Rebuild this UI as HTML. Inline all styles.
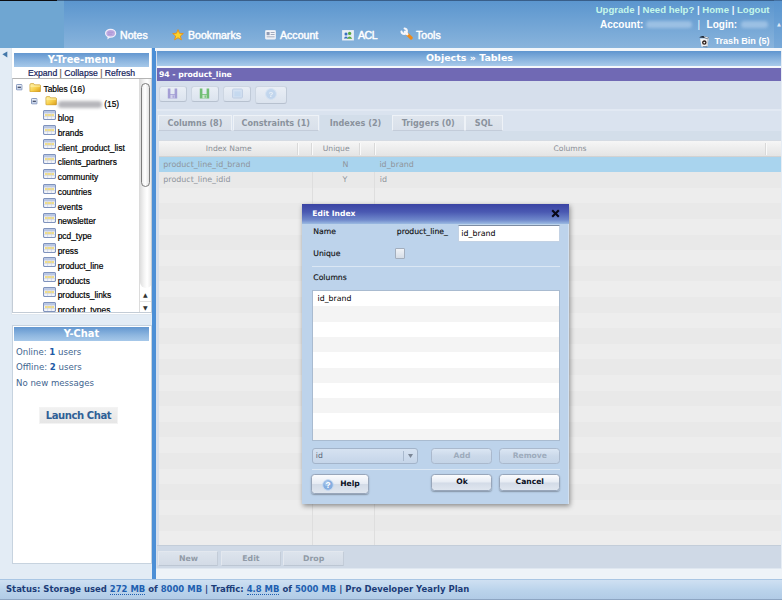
<!DOCTYPE html>
<html>
<head>
<meta charset="utf-8">
<title>Objects - Tables</title>
<style>
html,body{margin:0;padding:0;}
body{width:782px;height:600px;overflow:hidden;position:relative;background:#e3ecf5;font-family:"DejaVu Sans","Liberation Sans",sans-serif;font-size:9px;color:#000;}
.abs{position:absolute;}
#hdr{left:0;top:0;width:782px;height:48px;background:linear-gradient(#5a95ce,#89b4dc);}
#hdrL{left:0;top:0;width:64px;height:48px;background:#6fa6d2;}
#blk{left:0;top:0;width:57px;height:1.2px;background:#0c0c10;}
#topln{left:57px;top:0;width:725px;height:1px;background:rgba(30,50,80,.55);}
.nav{top:28px;height:14px;line-height:14px;font-size:10.6px;font-family:"Liberation Sans",sans-serif;color:#fff;white-space:nowrap;-webkit-text-stroke:0.3px #fff;text-shadow:0 0 1px rgba(255,255,255,.5);}
.tl{color:#c4f7ea;font-weight:bold;font-size:9.6px;font-family:"Liberation Sans",sans-serif;white-space:nowrap;text-align:right;right:12.5px;}
.tl span.s{color:#eef6ff;}
.blur{display:inline-block;height:7px;border-radius:4px;background:rgba(190,215,240,.55);filter:blur(1.5px);vertical-align:middle;}
#rstrip{left:774px;top:0;width:8px;height:48px;background:rgba(90,150,210,.35);}
/* left */
#lgut{left:0;top:48px;width:12px;height:531px;background:#e3ecf5;}
.ptitle{background:linear-gradient(#6397d0,#8fb7e0 60%,#a6c8e9);color:#fff;font-weight:bold;text-align:center;font-size:10px;line-height:13px;height:13px;}
#tree{left:12px;top:78.4px;width:140px;height:234.6px;background:#fff;border:1px solid #c3ccd6;border-top:1.2px solid #b4b4b4;box-sizing:border-box;overflow:hidden;}
.ti{position:absolute;left:45.8px;margin-top:1.6px;font-size:8.4px;font-family:"Liberation Sans",sans-serif;line-height:11px;white-space:nowrap;color:#000;-webkit-text-stroke:0.2px #000;}
.tic{position:absolute;left:31px;margin-top:-1.1px}
.fold{position:absolute;width:11px;height:8px;background:linear-gradient(#fbe38a,#e3a92b);border:1px solid #b98a1e;border-radius:1px;box-sizing:border-box;}
.fold:before{content:"";position:absolute;left:-1px;top:-3px;width:5px;height:2px;background:#eec04c;border:1px solid #b98a1e;border-bottom:none;border-radius:1px 1px 0 0;}
.pm{position:absolute;width:6px;height:6px;border:1px solid #6d7f9c;background:#fff;border-radius:1px;}
.pm:before{content:"";position:absolute;left:1px;top:2.5px;width:4px;height:1px;background:#223;}
#chat{left:12px;top:325px;width:140px;height:238.5px;background:#fff;border:1px solid #c7d3df;box-sizing:border-box;}
.cl{position:absolute;left:4px;font-size:8.6px;color:#3f6690;white-space:nowrap;}
.cl b{color:#1e5aa6;}
#vbar{left:152.4px;top:48px;width:3.7px;height:530.6px;background:#4c8fd6;}
/* main */
#main{left:156.3px;top:51px;width:625.7px;height:518px;background:#d6dfec;}
#mtitle{left:157px;top:51px;width:625px;height:15.4px;background:linear-gradient(#5f95cf,#8db6df 60%,#a9cbea);color:#fff;font-weight:bold;font-size:9.5px;line-height:14.6px;}
#ptitle2{left:157px;top:68px;width:625px;height:13.2px;background:#7069b4;color:#fff;font-weight:bold;font-size:7.7px;line-height:13px;}
.tbtn{position:absolute;top:85.5px;height:16px;width:28px;border:1px solid #cdd6e2;border-bottom-color:#b7c1cf;border-right-color:#c0cad8;border-radius:3px;background:linear-gradient(#e9eef5,#dbe3ee);box-sizing:border-box;}
.tab{position:absolute;top:115.3px;height:15.5px;border:1px solid #eef2f7;border-bottom:1px solid #c3ccd9;background:linear-gradient(#e0e6ee,#d9e0ea);box-sizing:border-box;font-size:8.1px;font-weight:bold;color:#8a929d;text-align:center;line-height:14px;}
#grid{left:159px;top:141.4px;width:621.6px;height:403.4px;background:repeating-linear-gradient(#e9e9e9 0,#e9e9e9 15.6px,#ededed 15.6px,#ededed 31.2px);}
#ghead{left:159px;top:140.2px;width:621.6px;height:16.4px;background:linear-gradient(#f6f6f6,#e4e4e4);border-bottom:1px solid #d2d2d2;border-top:1px solid #d5dbe3;box-sizing:border-box;}
.gh{position:absolute;top:141px;height:15.6px;line-height:15.8px;font-size:7.64px;color:#8a8f96;text-align:center;}
.gc{position:absolute;font-size:7.95px;color:#8f949c;line-height:15.8px;height:15.6px;white-space:nowrap;}
.vl{position:absolute;top:157px;width:1px;height:388px;background:#dedede;}
.hs{position:absolute;top:142.5px;width:1px;height:12.5px;background:#d9d9d9;box-shadow:1px 0 0 #fafafa;}
.bbtn{position:absolute;top:551px;height:15.4px;width:60px;border:1px solid #e3e8ef;border-bottom-color:#bcc6d3;border-right-color:#c3ccd8;border-radius:1px;background:linear-gradient(#dde4ed,#d3dbe6);box-sizing:border-box;font-size:7.8px;font-weight:bold;color:#909aa6;text-align:center;line-height:13.5px;}
#status{left:0;top:578.6px;width:782px;height:21.4px;background:linear-gradient(#cfe0f2,#bad3eb 55%,#b1cbe6);border-top:1px solid #a9c6e4;border-bottom:1.5px solid #8da5c2;box-sizing:border-box;font-size:8.48px;font-weight:bold;color:#1c3c78;line-height:19.6px;white-space:nowrap;}
#status u{color:#1f5fb0;text-decoration:none;border-bottom:1px dotted #1f5fb0;}
#status i{color:#1f5fb0;font-style:normal;}
/* dialog */
#dlg{left:302.3px;top:203.6px;width:266.5px;height:300.2px;background:#bdd3eb;box-shadow:1px 2px 5px rgba(0,0,0,.42), inset -1px 0 0 rgba(255,255,255,.3);}
#dtitle{left:0;top:0;width:266.8px;height:20px;background:linear-gradient(#3a43a3,#4a59b2 40%,#6f88cb 80%,#9cbbe2);color:#fff;font-weight:bold;font-size:7.6px;line-height:18px;}
.dl{position:absolute;-webkit-text-stroke:0.15px #111;font-size:7.7px;color:#111;white-space:nowrap;}
.dbtn{position:absolute;height:16px;border:1px solid #98a6ba;border-radius:3.5px;background:linear-gradient(#fbfcfe,#e6ebf3 48%,#d3dbe7 52%,#dfe6ef);box-sizing:border-box;font-size:7.6px;font-weight:bold;color:#0a0f1e;text-align:center;line-height:14.6px;box-shadow:0 1px 1.5px rgba(0,0,0,.3);}
.dbtn.dis{color:#9dabbc;border-color:#aab9cd;background:linear-gradient(#dbe6f3,#cbd9ea 50%,#c4d4e7);box-shadow:none;}
</style>
</head>
<body>
<!-- header -->
<div class="abs" id="hdr"></div>
<div class="abs" id="hdrL"></div>
<div class="abs" id="blk"></div><div class="abs" id="topln"></div>
<div class="abs" id="rstrip"></div>
<div class="abs" style="left:777px;top:21px;font-size:5px;color:#dfeaf6;">▲</div>

<svg class="abs" style="left:104px;top:28px" width="13" height="13" viewBox="0 0 13 13"><path d="M3.6 8.4 L3.4 11.4 L6.6 9Z" fill="#f2eefa"/><ellipse cx="6.6" cy="5.3" rx="5" ry="3.9" fill="#bda9e0" stroke="#f2eefa" stroke-width="1.3"/><path d="M4 4.3 H9.2 M4 6.2 H8" stroke="#a893d2" stroke-width=".8"/></svg>
<div class="abs nav" style="left:120px">Notes</div>
<svg class="abs" style="left:172px;top:28.5px" width="12" height="12" viewBox="0 0 14 14"><path d="M7 0.8 L8.8 5 L13.2 5.3 L9.8 8.2 L10.9 12.6 L7 10.2 L3.1 12.6 L4.2 8.2 L0.8 5.3 L5.2 5Z" fill="#fbd42a" stroke="#e8921a" stroke-width="1.1" stroke-linejoin="round"/></svg>
<div class="abs nav" style="left:188px">Bookmarks</div>
<svg class="abs" style="left:264.5px;top:30px" width="11" height="10" viewBox="0 0 11 10"><rect x=".5" y=".5" width="10" height="8.6" rx=".6" fill="#f3f5f9" stroke="#e3e9f2"/><rect x="1.6" y="2" width="3" height="3.2" fill="#8f9ab3"/><rect x="5.6" y="2" width="4" height=".9" fill="#98a2b6"/><rect x="5.6" y="4" width="4" height=".9" fill="#98a2b6"/><rect x="1.6" y="6.4" width="8" height=".9" fill="#98a2b6"/></svg>
<div class="abs nav" style="left:280px">Account</div>
<svg class="abs" style="left:342px;top:29.5px" width="12" height="11" viewBox="0 0 12 11"><rect x=".6" y=".6" width="10.8" height="9.4" fill="#f0f4f8" stroke="#e6ecf3" stroke-width="1"/><rect x="1.6" y="1.6" width="8.8" height="7.4" fill="#dfe8f0"/><circle cx="4" cy="4" r="1.5" fill="#3a6fc2"/><path d="M1.8 8.6 Q4 4.6 6.2 8.6Z" fill="#3a6fc2"/><circle cx="7.6" cy="3.4" r="1.6" fill="#57a840"/><path d="M5 8.8 Q7.6 4.2 10.2 8.8Z" fill="#57a840"/></svg>
<div class="abs nav" style="left:358px;letter-spacing:-0.5px">ACL</div>
<svg class="abs" style="left:400px;top:27px" width="14" height="14" viewBox="0 0 14 14"><path d="M7.2 7.2 L11.2 11" stroke="#ee8a18" stroke-width="3.2" stroke-linecap="round"/><path d="M5 5 L7.2 7.2" stroke="#f3f3f7" stroke-width="2.6" stroke-linecap="round"/><path d="M1.5 4.6 A2.7 2.7 0 1 0 4.6 1.5" stroke="#f6f6fa" stroke-width="2.1" fill="none" stroke-linecap="round"/></svg>
<div class="abs nav" style="left:416px">Tools</div>

<div class="abs tl" style="top:4px">Upgrade <span class="s">|</span> Need help? <span class="s">|</span> Home <span class="s">|</span> Logout</div>
<div class="abs tl" style="top:19px;color:#fff;font-size:10px;left:600px;right:auto">Account:</div>
<div class="abs blur" style="left:646px;top:21px;width:46px"></div>
<div class="abs tl" style="top:19px;color:#eef6ff;font-size:10px;left:697.5px;right:auto;font-weight:normal">|</div>
<div class="abs tl" style="top:19px;color:#fff;font-size:10px;left:706.6px;right:auto">Login:</div>
<div class="abs blur" style="left:741px;top:21px;width:27px"></div>
<div class="abs tl" style="top:35.7px;color:#fff;font-size:9.1px">Trash Bin (5)</div>
<svg class="abs" style="left:698px;top:35px" width="12" height="13" viewBox="0 0 12 13"><path d="M2 3.5 L10.6 3.2 L9.6 11.6 L3.6 11.8Z" fill="#f4f4f4"/><path d="M9 4 L10.6 3.2 L9.6 11.6 L8.3 11.7Z" fill="#c9ced6"/><path d="M1.2 2.6 Q3 0.6 6 1.2 L10.8 2.6 Q10.5 4 8.6 3.6 Q5 2.6 1.2 2.6Z" fill="#1d2430"/><path d="M6 1.3 L10.6 2.6 L9.8 3.6 L6.4 2.6Z" fill="#e8eaee"/><circle cx="6.3" cy="7.6" r="1.6" fill="#f2f2f2" stroke="#2a1a14" stroke-width="1.3"/><path d="M4.5 11.6 L9.5 11.5 L9.4 12.2 L5 12.1Z" fill="#39536e"/></svg>

<!-- left column -->
<div class="abs" id="lgut"></div>
<svg class="abs" style="left:2px;top:51px" width="6" height="7" viewBox="0 0 6 7"><path d="M5.3 0.4 L5.3 6.4 L0.4 3.2Z" fill="#4578a9"/></svg>
<div class="abs" style="left:11.2px;top:48.4px;width:140.8px;height:267px;background:#fff;border:1px solid #dfe7ef;border-top:none;box-sizing:border-box;"></div>
<div class="abs ptitle" style="left:14px;top:53.3px;width:135px;height:13.5px;font-size:9.9px">Y-Tree-menu</div>
<div class="abs" style="left:14px;top:67px;width:135px;height:13px;text-align:center;font-size:8.65px;font-family:'Liberation Sans',sans-serif;line-height:13px;color:#141c5a;white-space:nowrap;-webkit-text-stroke:0.2px #141c5a">Expand <span style="color:#b08a3a">|</span> Collapse <span style="color:#b08a3a">|</span> Refresh</div>
<svg width="0" height="0" style="position:absolute"><defs>
<linearGradient id="fg" x1="0" y1="0" x2="1" y2="1"><stop offset="0" stop-color="#fff3a6"/><stop offset=".55" stop-color="#f7cf4a"/><stop offset="1" stop-color="#d99a1c"/></linearGradient>
<linearGradient id="pg" x1="0" y1="0" x2="0" y2="1"><stop offset="0" stop-color="#f4f7fc"/><stop offset="1" stop-color="#b9c8e2"/></linearGradient>
<symbol id="tbl" viewBox="0 0 13 10"><rect x=".5" y=".5" width="12" height="9" rx="1.3" fill="#f3f5fa" stroke="#7f93bd" stroke-width="1.1"/><rect x="1" y="1" width="11" height="2" fill="#b9c7e3"/><rect x="2" y="4" width="9" height="2.2" fill="#f2de86"/><path d="M1 3.6 H12 M1 6.6 H12 M4.6 3.6 V9 M8.4 3.6 V9" stroke="#c9cfdf" stroke-width=".6" fill="none"/></symbol>
<symbol id="fld" viewBox="0 0 12 10"><path d="M.5 2 Q.5 .6 1.6 .6 H4.4 L5.4 1.9 H10.6 Q11.5 1.9 11.5 2.8 V8.6 Q11.5 9.4 10.6 9.4 H1.4 Q.5 9.4 .5 8.6Z" fill="url(#fg)" stroke="#c79a2e" stroke-width=".7"/><path d="M1 3.2 H11" stroke="#fff7c4" stroke-width=".8"/></symbol>
<symbol id="pm" viewBox="0 0 7 7"><rect x=".5" y=".5" width="6" height="6" rx=".8" fill="url(#pg)" stroke="#7f93ba"/><path d="M1.8 3.5 H5.2" stroke="#1b2340" stroke-width="1.2"/></symbol>
</defs></svg>
<div class="abs" id="tree"><div style="position:absolute;left:-1.1px;top:0.4px">
  <svg class="abs" style="left:4px;top:4.3px" width="6.6" height="6.6"><use href="#pm"/></svg>
  <svg class="abs" style="left:17.1px;top:2.9px" width="12.4" height="9.6"><use href="#fld"/></svg>
  <div class="ti" style="left:31.6px;top:2.8px">Tables (16)</div>
  <svg class="abs" style="left:19.4px;top:18.4px" width="6.6" height="6.6"><use href="#pm"/></svg>
  <svg class="abs" style="left:32.6px;top:16.3px" width="12.4" height="9.6"><use href="#fld"/></svg>
  <div class="ti" style="left:46px;top:17.2px"><span class="blur" style="width:44px;background:rgba(110,110,120,.5)"></span> (15)</div>
  <svg class="tic" style="top:31.20px" width="13" height="10"><use href="#tbl"/></svg><div class="ti" style="top:31.80px">blog</div>
  <svg class="tic" style="top:45.96px" width="13" height="10"><use href="#tbl"/></svg><div class="ti" style="top:46.56px">brands</div>
  <svg class="tic" style="top:60.72px" width="13" height="10"><use href="#tbl"/></svg><div class="ti" style="top:61.32px">client_product_list</div>
  <svg class="tic" style="top:75.48px" width="13" height="10"><use href="#tbl"/></svg><div class="ti" style="top:76.08px">clients_partners</div>
  <svg class="tic" style="top:90.24px" width="13" height="10"><use href="#tbl"/></svg><div class="ti" style="top:90.84px">community</div>
  <svg class="tic" style="top:105.00px" width="13" height="10"><use href="#tbl"/></svg><div class="ti" style="top:105.60px">countries</div>
  <svg class="tic" style="top:119.76px" width="13" height="10"><use href="#tbl"/></svg><div class="ti" style="top:120.36px">events</div>
  <svg class="tic" style="top:134.52px" width="13" height="10"><use href="#tbl"/></svg><div class="ti" style="top:135.12px">newsletter</div>
  <svg class="tic" style="top:149.28px" width="13" height="10"><use href="#tbl"/></svg><div class="ti" style="top:149.88px">pcd_type</div>
  <svg class="tic" style="top:164.04px" width="13" height="10"><use href="#tbl"/></svg><div class="ti" style="top:164.64px">press</div>
  <svg class="tic" style="top:178.80px" width="13" height="10"><use href="#tbl"/></svg><div class="ti" style="top:179.40px">product_line</div>
  <svg class="tic" style="top:193.56px" width="13" height="10"><use href="#tbl"/></svg><div class="ti" style="top:194.16px">products</div>
  <svg class="tic" style="top:208.32px" width="13" height="10"><use href="#tbl"/></svg><div class="ti" style="top:208.92px">products_links</div>
  <svg class="tic" style="top:223.08px" width="13" height="10"><use href="#tbl"/></svg><div class="ti" style="top:223.68px">product_types</div>
  </div><!-- scrollbar -->
  <div style="position:absolute;left:126px;top:0;width:13px;height:236px;background:#fff;border-left:1px solid #dcdcdc;"></div>
  <div style="position:absolute;left:127.4px;top:-6px;width:11.2px;height:215px;border-radius:6px;background:linear-gradient(90deg,#dedede,#f4f4f4 35%,#fff 60%,#e6e6e6);"></div>
  <div style="position:absolute;left:127px;top:222px;width:12px;height:1px;background:#e2e2e2"></div>
  <div style="position:absolute;left:127.7px;top:3.6px;width:7.2px;height:102.2px;border:1.7px solid #7c7c7c;border-radius:5.5px;background:linear-gradient(90deg,#ececec,#fff 45%,#e2e2e2);"></div>
  <div style="position:absolute;left:130px;top:212px;font-size:6px;line-height:7px;color:#333">▲</div>
  <div style="position:absolute;left:130px;top:224.5px;font-size:6px;line-height:7px;color:#333">▼</div>
</div>

<div class="abs" id="chat"></div>
<div class="abs ptitle" style="left:14px;top:327.4px;width:135px;height:13.4px;font-size:9.9px">Y-Chat</div>
<div class="abs cl" style="left:16px;top:346.6px">Online: <b>1</b> users</div>
<div class="abs cl" style="left:16px;top:362px">Offline: <b>2</b> users</div>
<div class="abs cl" style="left:16px;top:377.5px">No new messages</div>
<div class="abs" style="left:39px;top:407.4px;width:79px;height:16.6px;background:linear-gradient(#f1f1f1,#e6e6e6);border:1px solid #f3f3f3;box-sizing:border-box;text-align:center;font-family:'DejaVu Sans Condensed','DejaVu Sans',sans-serif;font-size:11.2px;letter-spacing:-0.45px;font-weight:bold;color:#2f6096;line-height:16.6px;">Launch Chat</div>

<div class="abs" id="vbar"></div>

<!-- main -->
<div class="abs" id="main"></div>
<div class="abs" style="left:155px;top:48px;width:627px;height:3px;background:#f2f6fa"></div>
<div class="abs" id="mtitle"><span style="position:absolute;left:269px;white-space:nowrap">Objects » Tables</span></div>
<div class="abs" style="left:157px;top:66.4px;width:625px;height:1.6px;background:#f5f8fb"></div>
<div class="abs" id="ptitle2"><span style="position:absolute;left:2px;white-space:nowrap">94 - product_line</span></div>
<div class="tbtn" style="left:158.5px"></div>
<div class="tbtn" style="left:190.5px"></div>
<div class="tbtn" style="left:223px"></div>
<div class="tbtn" style="left:254.7px;width:32.7px;height:18px"></div>
<svg class="abs" style="left:167px;top:88px;opacity:.75" width="11" height="11" viewBox="0 0 11 11"><path d="M.8 .6 H3.4 V6 H7.6 V.6 H10.2 V10.4 H.8Z" fill="#8f86cc"/><rect x="3.4" y="6.8" width="4.2" height="3.6" fill="#cfcdea"/><rect x="5.6" y="7.4" width="1.2" height="2.4" fill="#8f86cc"/></svg>
<svg class="abs" style="left:199px;top:88px;opacity:.8" width="11" height="11" viewBox="0 0 11 11"><path d="M.8 .6 H3.4 V6 H7.6 V.6 H10.2 V10.4 H.8Z" fill="#55b455"/><rect x="3.4" y="6.8" width="4.2" height="3.6" fill="#c9e8c9"/><rect x="5.6" y="7.4" width="1.2" height="2.4" fill="#55b455"/></svg>
<svg class="abs" style="left:231.5px;top:88px;opacity:.6" width="11" height="11" viewBox="0 0 11 11"><rect x=".6" y="1" width="9.8" height="9" rx="1" fill="#c9dcf2" stroke="#a9bddb"/><rect x="2.4" y="3.4" width="6.2" height="5" fill="#b3d0ee"/></svg>
<svg class="abs" style="left:264.5px;top:88px;opacity:.55" width="12" height="12" viewBox="0 0 12 12"><circle cx="6" cy="6" r="5.4" fill="#a7c7ea" stroke="#c9dcf2"/><text x="6" y="9" font-size="8" font-weight="bold" text-anchor="middle" fill="#eef5fc" font-family="Liberation Sans,sans-serif">?</text></svg>

<div class="abs" style="left:157px;top:109px;width:625px;height:1.5px;background:#e2e9f3"></div>
<div class="abs" style="left:157px;top:110.5px;width:625px;height:20px;background:#dae3ef"></div>
<div class="abs" style="left:157px;top:130.5px;width:625px;height:10.5px;background:#d3deea;"></div>
<div class="tab" style="left:158px;width:74px">Columns (8)</div>
<div class="tab" style="left:232.5px;width:86.5px">Constraints (1)</div>
<div class="tab" style="left:319.5px;width:72px;background:#d3deea;height:16.5px;border:none;line-height:16px">Indexes (2)</div>
<div class="tab" style="left:392px;width:72.5px">Triggers (0)</div>
<div class="tab" style="left:465px;width:37.5px">SQL</div>

<div class="abs" id="grid"></div>
<div class="abs" id="ghead"></div>
<div class="vl" style="left:311.6px"></div>
<div class="vl" style="left:373.6px"></div>
<div class="abs" style="left:159px;top:156.6px;width:621.6px;height:15.6px;background:#a9d4ee"></div>
<div class="hs" style="left:297px"></div><div class="hs" style="left:311.2px"></div><div class="hs" style="left:358.6px"></div><div class="hs" style="left:373.6px"></div><div class="hs" style="left:764.6px"></div>
<div class="gh" style="left:157px;width:143.6px">Index Name</div>
<div class="gh" style="left:312px;width:48.4px">Unique</div>
<div class="gh" style="left:374px;width:392px">Columns</div>
<div class="gc" style="left:163.3px;top:156.6px">product_line_id_brand</div>
<div class="gc" style="left:342.6px;top:156.6px">N</div>
<div class="gc" style="left:379.4px;top:156.6px">id_brand</div>
<div class="gc" style="left:163.3px;top:172.2px">product_line_idid</div>
<div class="gc" style="left:342.6px;top:172.2px">Y</div>
<div class="gc" style="left:379.8px;top:172.2px">id</div>

<div class="abs" style="left:157px;top:544.8px;width:625px;height:23.6px;background:#cfd9e6;border-top:1px solid #c3cdd9;box-sizing:border-box"></div>
<div class="bbtn" style="left:158.4px">New</div>
<div class="bbtn" style="left:220.9px">Edit</div>
<div class="bbtn" style="left:283.3px;width:60.7px">Drop</div>
<div class="abs" style="left:156px;top:568.4px;width:626px;height:10.2px;background:#eef3f8;border-top:1px solid #dfe7f0;box-sizing:border-box"></div>

<div class="abs" style="left:780.6px;top:51px;width:1.4px;height:518px;background:#e6edf5"></div>
<!-- status -->
<div class="abs" id="status"><span style="position:absolute;left:6px">Status: Storage used <u>272 MB</u> of <i>8000 MB</i> | Traffic: <u>4.8 MB</u> of <i>5000 MB</i> | Pro Developer Yearly Plan</span></div>

<!-- dialog -->
<div class="abs" id="dlg">
  <div class="abs" id="dtitle"><span style="position:absolute;left:10px;top:1px">Edit Index</span>
    <svg style="position:absolute;left:248.6px;top:5.5px" width="9" height="9" viewBox="0 0 9 9"><path d="M1.2 1.2 L7.8 7.8 M7.8 1.2 L1.2 7.8" stroke="#080818" stroke-width="2.1"/></svg>
  </div>
  <div class="dl" style="left:11px;top:23px">Name</div>
  <div class="dl" style="left:94.5px;top:23px">product_line_</div>
  <div class="abs" style="left:155.5px;top:21.5px;width:102.5px;height:16.5px;background:#fff;border:1px solid #c3d2e4;border-top-color:#7c8ca3;box-sizing:border-box;font-size:7.9px;line-height:15.5px;padding-left:2.5px;">id_brand</div>
  <div class="dl" style="left:11px;top:45px">Unique</div>
  <div class="abs" style="left:92.3px;top:44.6px;width:10.4px;height:10.6px;border:1px solid #a3aebd;background:linear-gradient(#f0f3f7,#d6dde7);box-sizing:border-box;border-radius:1px"></div>
  <div class="abs" style="left:10px;top:62px;width:248px;height:1px;background:#dbe7f4"></div>
  <div class="dl" style="left:11px;top:69.4px">Columns</div>
  <div class="abs" style="left:9.9px;top:86.1px;width:247.8px;height:151.3px;background:repeating-linear-gradient(#fff 0,#fff 15.3px,#f4f4f4 15.3px,#f4f4f4 30.6px);border:1px solid #a9bbd0;box-sizing:border-box;"><span style="position:absolute;left:4.4px;top:3.6px;font-size:7.8px">id_brand</span></div>
  <div class="abs" style="left:9.5px;top:244px;width:106.6px;height:16px;border:1px solid #a3b4ca;border-radius:3px;background:linear-gradient(#d6e2f1,#c5d5e9);box-sizing:border-box;font-size:7.7px;color:#5c6878;line-height:14.5px;padding-left:3px">id
    <span style="position:absolute;left:90.5px;top:2px;width:1px;height:10px;background:#a9b9cd"></span>
    <svg style="position:absolute;left:95.5px;top:5px" width="5" height="4" viewBox="0 0 5 4"><path d="M0 0 H5 L2.5 4Z" fill="#7b8696"/></svg>
  </div>
  <div class="dbtn dis" style="left:129.2px;top:244px;width:61px">Add</div>
  <div class="dbtn dis" style="left:197px;top:244px;width:61px">Remove</div>
  <div class="abs" style="left:10px;top:265.7px;width:248px;height:1px;background:#dbe7f4"></div>
  <div class="dbtn" style="left:9.1px;top:270.9px;width:58.1px;height:19.8px;line-height:18px;padding-left:19px">Help
    <svg style="position:absolute;left:9.5px;top:3.4px" width="12" height="12" viewBox="0 0 12 12"><circle cx="6" cy="6" r="5.3" fill="#86aee0" stroke="#c4d8f0" stroke-width="1"/><circle cx="5" cy="4.4" r="2.6" fill="#a9c8ec" opacity=".8"/><text x="6" y="9" font-size="8.4" font-weight="bold" text-anchor="middle" fill="#fff" font-family="Liberation Sans,sans-serif">?</text></svg>
  </div>
  <div class="dbtn" style="left:129.2px;top:270.9px;width:61px;height:16.6px">Ok</div>
  <div class="dbtn" style="left:197px;top:270.9px;width:61px;height:16.6px">Cancel</div>
</div>
</body>
</html>
